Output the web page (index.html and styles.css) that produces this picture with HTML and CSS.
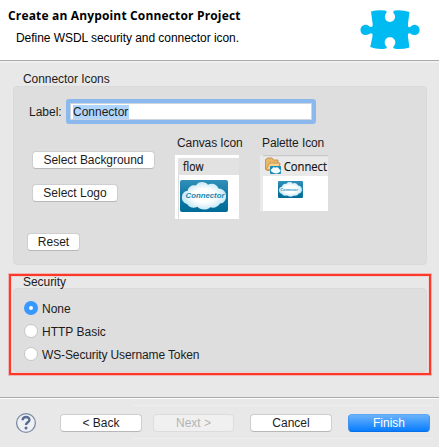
FILE: index.html
```html
<!DOCTYPE html>
<html lang="en">
<head>
<meta charset="utf-8">
<title>Create an Anypoint Connector Project</title>
<link rel="stylesheet" href="styles.css">
</head>
<body>
<main class="dialog">
  <header class="header">
    <div class="heading">
      <h1 class="title">Create an Anypoint Connector Project</h1>
      <p class="description">Define WSDL security and connector icon.</p>
    </div>
    <svg class="puzzle" width="60" height="42" viewBox="0 0 60 42" fill="#00bbf2">
      <path d="M11 1.400Q18 -.3 25 .6Q27 1 26.600 2.600C25.800 3.800 24.900 4.800 24.900 6.800C24.900 9.800 27 11.900 29.900 11.900S35 9.800 35 6.800C35 4.800 34 3.800 33.300 2.600Q33 1 35 .6Q42 -.3 49.500 2L48 13.600Q47.600 17 49 17.200C50.500 17.500 51.500 14.700 54.300 14.700C57.500 14.700 59.600 17 59.600 19.900S57.500 25.100 54.300 25.100C51.500 25.100 50.500 22.900 49 23.200Q47.600 23.500 48 27L49.500 37.400Q42 39.700 35 38.800Q32.600 38.400 33.400 36.800C34.300 35.500 35.300 34.500 35.300 32.500C35.300 29.300 33 27.300 30 27.300S24.700 29.300 24.700 32.500C24.700 34.500 25.700 35.500 26.600 36.800Q27.400 38.400 25 38.800Q17 39.700 10.200 37L12.400 27Q13 23.200 11.200 23.200C9.500 23.200 8.500 25.100 5.800 25.100C2.600 25.100 .5 22.800 .5 19.900S2.600 14.700 5.800 14.700C8.500 14.700 9.500 17.100 11.200 17Q13 16.700 12.600 13.600Z"/>
    </svg>
  </header>

  <div class="content">
    <section class="group">
      <h2 class="group-title">Connector Icons</h2>
      <div class="panel icons-panel">
        <div class="field">
          <label class="field-label">Label:</label>
          <div class="input"><span class="selected">Connector</span></div>
        </div>
        <div class="icon-row">
          <div class="actions">
            <button class="button background">Select Background</button>
            <button class="button logo">Select Logo</button>
            <button class="button reset">Reset</button>
          </div>
          <figure class="preview canvas">
            <figcaption>Canvas Icon</figcaption>
            <svg width="64" height="64" viewBox="0 0 64 64">
              <defs>
                <linearGradient id="blue" x2="0" y2="1"><stop stop-color="#2f8fb9"/><stop offset=".45" stop-color="#147ba6"/><stop offset="1" stop-color="#006b98"/></linearGradient>
                <radialGradient id="cloud"><stop offset=".5" stop-color="#fff"/><stop offset="1" stop-color="#c7e8f5"/></radialGradient>
                <path id="cloudshape" d="M7 24C3.500 23 1.500 20 2 16.500C2.300 13 5 11 7.500 11C8.500 6.500 12.500 4.500 16 5.500C18.500 1.200 25 1 28 4.800C32 2.600 37 4.200 38.500 8.500C42.500 8.500 46 11.500 46 15.500C46.500 20 43.500 23.500 40 23.500C38 27 34 28.500 30.500 27.300C27 30.500 20 30.300 17.500 26.800C13.500 28.800 9 27.500 7 24Z"/>
              </defs>
              <path d="M0 0h64v64H0z" fill="#fff"/>
              <path d="M3 3h61v17H3z" fill="#e2e2e2"/><path d="M3 20h1v44H3z" fill="#ddd"/>
              <text class="flow" x="8" y="16" textLength="20.500" lengthAdjust="spacingAndGlyphs">flow</text>
              <g transform="translate(5 25)"><rect width="48" height="32" rx="2" fill="url(#blue)"/><use href="#cloudshape" fill="url(#cloud)"/><text class="cloud-label" x="5.500" y="17.700" textLength="39" lengthAdjust="spacingAndGlyphs">Connector</text></g>
            </svg>
          </figure>
          <figure class="preview palette">
            <figcaption>Palette Icon</figcaption>
            <svg width="68" height="56" viewBox="0 0 68 56">
              <path d="M0 0h68v56H0z" fill="#e9e9e9"/><path d="M3 0h65v1.200H3z" fill="#c9c9c9"/><path d="M3 21h65v35H3z" fill="#fff"/>
              <path d="M5.500 14V4.500L8 3h4l1.500 2H18v4l2 .5-2 6H7Z" fill="#e8b86b" stroke="#bd853d" stroke-width=".8"/>
              <path d="M6 14.500 9.500 8H20l-2 7.500Z" fill="#f5cf8c" stroke="#c48c42" stroke-width=".8"/>
              <g transform="translate(10 11)"><rect width="11" height="8" rx="1" fill="#178bb7"/><path d="M2 6C0 5 .5 3 2 3 2.500.5 5 1 5.500 1.700 7.500.500 9 2 9 3c2 .5 2 3 0 3.500C7 8 4 7.500 2 6Z" fill="#f2fbff"/></g>
              <text class="connect" x="23.700" y="15.500" textLength="43.300" lengthAdjust="spacingAndGlyphs">Connect</text>
              <g transform="translate(18 26) scale(.52 .53)"><rect width="48" height="32" rx="2" fill="url(#blue)"/><use href="#cloudshape" fill="url(#cloud)"/><text class="cloud-label" x="5" y="18" textLength="33" lengthAdjust="spacingAndGlyphs">Connector</text></g>
            </svg>
          </figure>
        </div>
      </div>
    </section>

    <section class="group security">
      <h2 class="group-title">Security</h2>
      <div class="panel options">
        <div class="option"><span class="radio checked"></span><span>None</span></div>
        <div class="option"><span class="radio"></span><span>HTTP Basic</span></div>
        <div class="option"><span class="radio"></span><span class="long">WS-Security Username Token</span></div>
      </div>
    </section>
  </div>

  <footer class="footer">
    <svg class="help" width="22" height="22" viewBox="0 0 22 22">
      <circle cx="11" cy="11" r="9.400" fill="#eef0f4" stroke="#7b8aa5" stroke-width="1.300"/>
      <path d="M7.600 8.200C7.700 3.900 14.500 4 14.400 7.900C14.400 10.300 11 10.300 11 13.100" fill="none" stroke="#5a6c91" stroke-width="2.400"/>
      <circle cx="11" cy="16" r="1.500" fill="#5a6c91"/>
    </svg>
    <button class="button back">&lt; Back</button>
    <div class="strip">
      <button class="button next" disabled>Next &gt;</button>
      <button class="button cancel">Cancel</button>
      <button class="button finish">Finish</button>
    </div>
  </footer>
</main>
</body>
</html>
```
FILE: styles.css
```css
* { box-sizing: border-box; }
body { margin: 0; background: #e8e8e8; color: #1c1c1c; font: 12px/14px "Liberation Sans", Arial, sans-serif; }
h1, h2, p, figure { margin: 0; }
.dialog { width: 439px; height: 447px; display: flex; flex-direction: column; overflow: hidden; }
.header { height: 61px; flex: none; display: flex; justify-content: space-between; background: #fff; border-bottom: 1px solid #aaa; color: #000; }
.heading { padding: 8px 0 0 8px; }
.title { font: bold 12px/16px "Open Sans", "Noto Sans", sans-serif; letter-spacing: .16px; white-space: nowrap; }
.description { margin: 7px 0 0 8px; letter-spacing: -.05px; white-space: nowrap; }
.puzzle { margin: 10px 19px 0 0; }
.content { height: 336px; flex: none; border-top: 2px solid #f0f0f0; padding: 9px 8px 0; }
.group { padding: 0 1px 0 5px; }
.group-title { height: 14px; padding-left: 10px; font-size: 12px; line-height: 15px; font-weight: normal; letter-spacing: -.05px; }
.panel { width: 414px; background: #dedede; border: 1px solid #d9d9d9; border-radius: 4px; }
.icons-panel { height: 179px; padding-top: 12px; }
.field { display: flex; height: 25px; align-items: center; padding-left: 15px; }
.field-label { width: 37px; }
.input { width: 250px; height: 25px; padding: 2px 3px; border: 4px solid #8bb9ed; border-radius: 3px; background: #fff; box-shadow: inset 0 0 0 1px #ccd5df; }
.selected { display: block; width: 56px; height: 14px; line-height: 14px; background: #b0d5ff; }
.icon-row { display: flex; }
.actions { width: 161px; padding: 27px 0 0 14px; display: flex; flex-direction: column; align-items: flex-start; }
.button { height: 18px; padding: 0; border: 1px solid #cecece; border-bottom-color: #b8b8b8; border-radius: 4px; background: #fff; color: #1c1c1c; font: 12px/16px "Liberation Sans", Arial, sans-serif; white-space: nowrap; }
.background { width: 123px; margin-left: 4px; letter-spacing: -.05px; }
.logo { width: 86px; margin: 15px 0 0 4px; }
.reset { width: 53px; margin: 31px 0 0 -1px; }
.preview { padding-top: 12px; }
.preview svg { display: block; margin-top: 5px; }
.canvas { width: 85px; }
.preview figcaption { padding-left: 2px; letter-spacing: -.1px; line-height: 15px; height: 14px; white-space: nowrap; }
.flow, .connect { font: 12px "Open Sans", sans-serif; fill: #111; stroke: #111; stroke-width: .15px; }
.cloud-label { font: italic bold 8px "Liberation Sans", sans-serif; fill: #1686ae; }
.security { width: 422px; height: 101px; margin: 9px 0 0 1px; padding: 0 0 0 2px; border: 2px solid #ff382a; box-shadow: 0 0 0 1px rgb(255 56 42 / 28%), inset 0 0 0 1px rgb(255 90 80 / 12%); }
.security .group-title { height: 12px; line-height: 12px; }
.options { height: 84px; padding: 12px 0 0 10px; }
.option { height: 23px; display: flex; align-items: flex-start; gap: 4px; line-height: 16px; }
.long { letter-spacing: -.12px; }
.radio { width: 14px; height: 14px; border: 1px solid #c6c6c6; border-radius: 50%; background: #fff; }
.radio.checked { border: 5px solid #3798ff; }
.footer { height: 50px; flex: none; display: flex; border-top: 1px solid #aaa; box-shadow: inset 0 1px #fbfbfb; }
.help { margin: 14px 0 0 15px; }
.back { position: relative; width: 82px; margin: 16px 0 0 23px; }
.strip { width: 301px; height: 34px; margin: 7px 0 0 -10px; padding: 8px 3px 0 21px; display: flex; border: solid #eee; border-width: 1px 0; }
.next { width: 81px; background: #f0f0f0; border-color: #dcdcdc; color: #b3b3b3; }
.cancel { width: 82px; margin-left: 16px; }
.finish { width: 82px; margin-left: 16px; color: #fff; background: linear-gradient(#6bb3fa, #087dff); border-color: #5ba7f5 #3e94ee #0870e4; }
```
